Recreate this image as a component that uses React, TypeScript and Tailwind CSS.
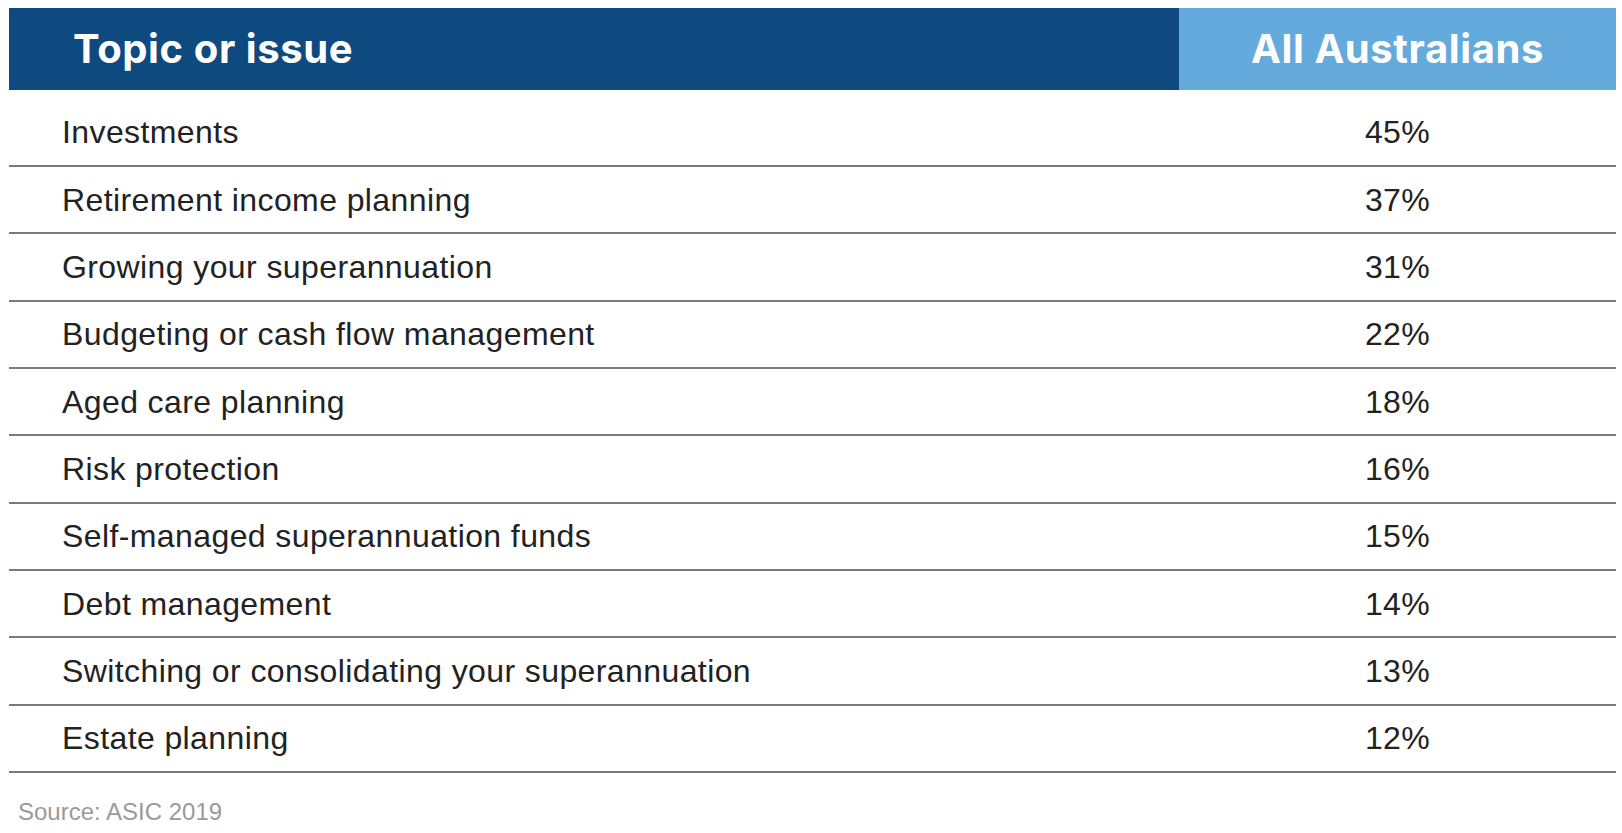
const ROWS = [
  { topic: 'Investments', value: '45%' },
  { topic: 'Retirement income planning', value: '37%' },
  { topic: 'Growing your superannuation', value: '31%' },
  { topic: 'Budgeting or cash flow management', value: '22%' },
  { topic: 'Aged care planning', value: '18%' },
  { topic: 'Risk protection', value: '16%' },
  { topic: 'Self-managed superannuation funds', value: '15%' },
  { topic: 'Debt management', value: '14%' },
  { topic: 'Switching or consolidating your superannuation', value: '13%' },
  { topic: 'Estate planning', value: '12%' },
]

export default function App() {
  return (
    <div className="min-h-screen bg-white px-[9px] pt-[8px] font-['Liberation_Sans',Arial,sans-serif]">
      <div className="w-[1607px]">
        {/* header */}
        <div className="flex h-[82px] font-['Inter',sans-serif] text-[40px] font-bold tracking-[0.6px] text-white">
          <div className="flex flex-1 items-center bg-[#0e4a7f] pl-[64px]">Topic or issue</div>
          <div className="flex w-[437px] items-center justify-center bg-[#65aadd]">All Australians</div>
        </div>

        {/* rows */}
        {ROWS.map((row, i) => (
          <div
            key={row.topic}
            className={`flex items-center border-b-2 border-[#7a7a7a] text-[32px] tracking-[0.4px] text-[#222] ${
              i === 0 ? 'h-[77px] pt-[8px]' : 'h-[67.33px]'
            }`}
          >
            <div className="flex-1 pl-[53px]">{row.topic}</div>
            <div className="w-[437px] text-center">{row.value}</div>
          </div>
        ))}

        <p className="pl-[9px] pt-[21px] text-[24px] text-[#9a9a9a]">Source: ASIC 2019</p>
      </div>
    </div>
  )
}
